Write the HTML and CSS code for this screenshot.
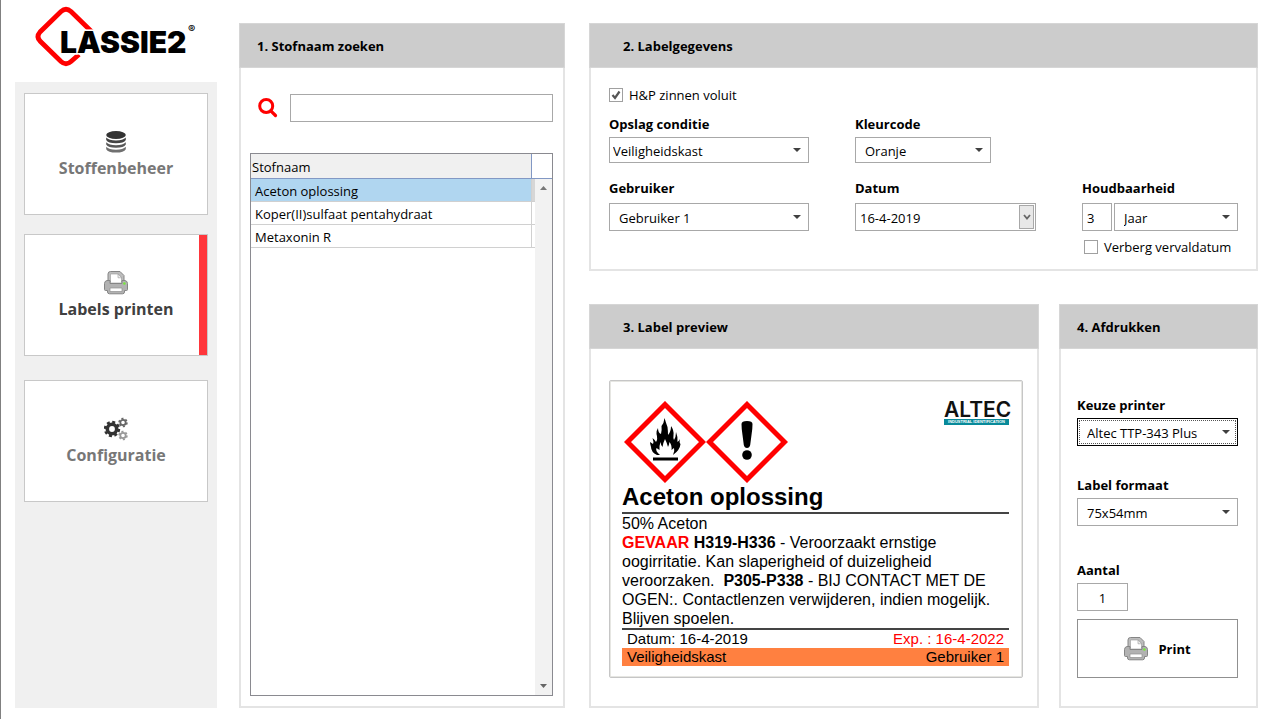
FILE: index.html
```html
<!DOCTYPE html>
<html lang="nl">
<head>
<meta charset="utf-8">
<meta name="viewport" content="width=device-width, initial-scale=1">
<title>LASSIE2 - Labels printen</title>
<link rel="stylesheet" href="styles.css">
</head>
<body>
<svg class="symbols" aria-hidden="true">
  <symbol id="icon-printer" viewBox="0 0 24 24">
    <path d="M4 10.500V3a2.500 2.500 0 0 1 2.500-2.500H16L20 4.500V10.500Z" fill="#bdbdbd" stroke="#858585"/>
    <path d="M6.500 12V3H14.500L17.500 6.500V12Z" fill="#fff" stroke="#999" stroke-width=".6"/>
    <path d="M14 3V6.800H17.800Z" fill="#eee" stroke="#999" stroke-width=".6"/>
    <path d="M3 9.500H6V12.500H18V9.500H21Q23.500 10 23.500 12.500V18.500Q23.500 19.500 22.500 19.500H20.500V21Q20.500 22.800 18.500 22.800H5.500Q3.500 22.800 3.500 21V19.500H1.500Q.5 19.500 .5 18.500V12.500Q.5 10 3 9.500Z" fill="#b2b2b2" stroke="#858585"/>
    <path d="M6 17H18V20.500H6Z" fill="#fff" stroke="#909090" stroke-width=".7"/>
    <circle cx="20.400" cy="12.500" r="1.300" fill="#77e83a"/>
  </symbol>
</svg>
<div class="app">
  <aside class="side">
    <svg class="logo" viewBox="0 0 170 62" role="img" aria-label="LASSIE2">
      <path d="M60 26 L39 5.500 Q34 1 29 5.500 L8 26 Q4 30.500 8 35 L29 55.500 Q34 60 39 55.500 L47 48.500" fill="none" stroke="#f00" stroke-width="4.800"/>
      <text class="logo-text" x="28" y="47">LASSIE2</text>
      <text class="logo-mark" x="156" y="27">®</text>
    </svg>
    <nav class="nav">
      <div class="nav-group">
        <button class="nav-item" type="button">
          <svg class="nav-icon" viewBox="0 0 24 24" aria-hidden="true">
            <ellipse cx="12" cy="5" rx="9.800" ry="4" fill="#333"/>
            <path d="M2.200 7.600Q5 10.600 12 10.600T21.800 7.600V10Q20 13.200 12 13.200T2.200 10Z" fill="#444"/>
            <path d="M2.200 12.200Q5 15.200 12 15.200T21.800 12.200V14.600Q20 17.800 12 17.800T2.200 14.600Z" fill="#585858"/>
            <path d="M2.200 16.800Q5 19.800 12 19.800T21.800 16.800V19.200Q20 22.600 12 22.600T2.200 19.200Z" fill="#707070"/>
          </svg>
          <span>Stoffenbeheer</span>
        </button>
        <button class="nav-item nav-item--active" type="button" aria-current="page">
          <svg class="nav-icon" aria-hidden="true"><use href="#icon-printer"/></svg>
          <span>Labels printen</span>
        </button>
      </div>
      <button class="nav-item" type="button">
        <svg class="nav-icon" viewBox="0 0 24 24" fill="none" aria-hidden="true">
          <circle cx="8" cy="12" r="4.700" stroke="#333" stroke-width="3.600"/>
          <circle cx="8" cy="12" r="7" stroke="#333" stroke-width="2.400" stroke-dasharray="3 2.500"/>
          <circle cx="19" cy="5.500" r="2.700" stroke="#666" stroke-width="1.800"/>
          <circle cx="19" cy="5.500" r="4" stroke="#666" stroke-width="1.500" stroke-dasharray="2.100 2.090"/>
          <circle cx="19" cy="18.500" r="2.700" stroke="#999" stroke-width="1.800"/>
          <circle cx="19" cy="18.500" r="4" stroke="#999" stroke-width="1.500" stroke-dasharray="2.100 2.090"/>
        </svg>
        <span>Configuratie</span>
      </button>
    </nav>
  </aside>

  <section class="panel">
    <h2 class="panel-title panel-title--near">1. Stofnaam zoeken</h2>
    <div class="search-body">
      <div class="search">
        <label for="search-name"><svg class="search-icon" viewBox="0 0 20 20" fill="none" stroke="#f00" role="img" aria-label="Zoeken"><circle cx="8.200" cy="8" r="6.500" stroke-width="3"/><path d="M12.800 12.800L17.500 17.500" stroke-width="3.200" stroke-linecap="round"/></svg></label>
        <input class="control" id="search-name" type="text">
      </div>
      <div class="list">
        <table class="list-table">
          <thead><tr><th>Stofnaam</th><th class="list-edge"></th></tr></thead>
          <tbody>
            <tr class="selected"><td>Aceton oplossing</td><td class="list-edge"></td></tr>
            <tr><td>Koper(II)sulfaat pentahydraat</td><td class="list-edge"></td></tr>
            <tr><td>Metaxonin R</td><td class="list-edge"></td></tr>
          </tbody>
        </table>
        <div class="scroll" aria-hidden="true">
          <svg class="scroll-arrow" viewBox="0 0 7 4"><path d="M0 4L3.500 0L7 4Z" fill="#777"/></svg>
          <svg class="scroll-arrow" viewBox="0 0 7 4"><path d="M0 0L3.500 4L7 0Z" fill="#666"/></svg>
        </div>
      </div>
    </div>
  </section>

  <main class="main">
    <section class="panel">
      <h2 class="panel-title">2. Labelgegevens</h2>
      <div class="details">
        <label class="check"><input type="checkbox" checked>H&amp;P zinnen voluit</label>
        <div class="detail-row">
          <div class="field">
            <label for="storage">Opslag conditie</label>
            <select class="control control--low control--flush" id="storage"><option>Veiligheidskast</option></select>
          </div>
          <div class="field">
            <label for="color">Kleurcode</label>
            <select class="control control--low control--short" id="color"><option>Oranje</option></select>
          </div>
        </div>
        <div class="detail-row detail-row--second">
          <div class="field">
            <label for="user">Gebruiker</label>
            <select class="control" id="user"><option>Gebruiker 1</option></select>
          </div>
          <div class="field">
            <label for="date">Datum</label>
            <div class="date">
              <input id="date" type="text" value="16-4-2019">
              <button class="date-button" type="button" aria-label="Kies datum"><svg viewBox="0 0 8 6" fill="none" stroke="#666" stroke-width="1.800"><path d="M1 1L4 4.500L7 1"/></svg></button>
            </div>
          </div>
          <div class="field">
            <label for="term">Houdbaarheid</label>
            <div class="term">
              <input class="control control--term" id="term" type="text" value="3">
              <select class="control" aria-label="Eenheid"><option>Jaar</option></select>
            </div>
            <label class="check check--inset"><input type="checkbox">Verberg vervaldatum</label>
          </div>
        </div>
      </div>
    </section>

    <div class="lower">
      <section class="panel">
        <h2 class="panel-title">3. Label preview</h2>
        <div class="preview">
          <article class="label">
            <header class="label-head">
              <div class="hazards">
                <svg class="hazard" viewBox="0 0 82 82" role="img" aria-label="Ontvlambaar">
                  <path d="M41 3.500L78.500 41L41 78.500L3.500 41Z" fill="#fff" stroke="#f00" stroke-width="5"/>
                  <path d="M33 54Q27 51 27 46Q26 43 26 41L29 43Q30 41 28.500 37Q31 39 32 41Q34 38 32.500 33Q32 30 34 27Q34 32 37 33Q38 29 37.500 25Q40 22 40.500 17Q42 22 43.500 26Q44 30 44 34Q47 31 47 25Q50 29 49.500 34Q49 37 50 39Q52 36 52 31Q54 36 53.500 41Q55 40 56 38Q55 42 56.500 43Q56 49 49 54Q51 50 50 47L47.500 49Q48 44 45.500 41Q45 44 44 46Q43 42 41 38Q39 42 38.500 46Q37 45 36.500 41Q35 45 35.500 49L32.500 47Q31 50 36 54Z" fill="#000"/>
                  <path d="M29 58H54" stroke="#000" stroke-width="3"/>
                </svg>
                <svg class="hazard" viewBox="0 0 82 82" role="img" aria-label="Schadelijk">
                  <path d="M41 3.500L78.500 41L41 78.500L3.500 41Z" fill="#fff" stroke="#f00" stroke-width="5"/>
                  <path d="M35.500 23Q35.500 20 41 20T46.500 23Q46.500 28 45.500 34L44.200 44Q43.500 47 41 47T37.800 44L36.500 34Q35.500 28 35.500 23Z"/>
                  <circle cx="41" cy="54" r="4.800"/>
                </svg>
              </div>
              <div class="brand"><strong>ALTEC</strong><span>INDUSTRIAL IDENTIFICATION</span></div>
            </header>
            <h3 class="label-name">Aceton oplossing</h3>
            <div class="label-text">
              <p>50% Aceton</p>
              <p><b class="danger">GEVAAR</b> <b>H319-H336</b> - Veroorzaakt ernstige oogirritatie. Kan slaperigheid of duizeligheid veroorzaken. &nbsp;<b>P305-P338</b> - BIJ CONTACT MET DE OGEN:. Contactlenzen verwijderen, indien mogelijk. Blijven spoelen.</p>
            </div>
            <div class="label-line"><span>Datum: 16-4-2019</span><span class="expiry">Exp. : 16-4-2022</span></div>
            <div class="label-line label-line--color"><span>Veiligheidskast</span><span>Gebruiker 1</span></div>
          </article>
        </div>
      </section>

      <section class="panel">
        <h2 class="panel-title panel-title--near">4. Afdrukken</h2>
        <form class="print">
          <div class="print-choices">
            <div class="field">
              <label for="printer">Keuze printer</label>
              <select class="control control--focus" id="printer"><option>Altec TTP-343 Plus</option></select>
            </div>
            <div class="field">
              <label for="format">Label formaat</label>
              <select class="control" id="format"><option>75x54mm</option></select>
            </div>
          </div>
          <div class="print-run">
            <div class="field">
              <label for="count">Aantal</label>
              <input class="control control--count" id="count" type="text" value="1">
            </div>
            <button class="print-button" type="button"><svg class="nav-icon" aria-hidden="true"><use href="#icon-printer"/></svg>Print</button>
          </div>
        </form>
      </section>
    </div>
  </main>
</div>
</body>
</html>
```
FILE: styles.css
```css
* { box-sizing: border-box; }

body {
  margin: 0;
  background: #fff;
  color: #000;
  font: 13px/20px "Open Sans", "Noto Sans", sans-serif;
}

h2, h3, p { margin: 0; }

button, input, select { font: inherit; color: inherit; }

.symbols { position: absolute; width: 0; height: 0; }

.app {
  display: grid;
  grid-template-columns: 202px minmax(0, 326fr) minmax(0, 671fr);
  column-gap: 22px;
  min-height: 100vh;
  padding: 23px 20px 11px 14px;
  border-left: 1px solid #808080;
}

/* Sidebar */
.side {
  display: flex;
  flex-direction: column;
  margin-top: -17px;
}

.logo {
  display: block;
  width: 170px;
  height: 62px;
  margin: 0 0 14px 17px;
  overflow: visible;
}

.logo-text {
  font: 900 30px Inter, sans-serif;
  stroke: #fff;
  stroke-width: 3px;
  paint-order: stroke;
}

.logo-mark { font: 700 11px Inter, sans-serif; }

.nav {
  flex: 1;
  display: flex;
  flex-direction: column;
  gap: 24px;
  padding: 11px 9px;
  background: #f0f0f0;
}

.nav-group {
  display: flex;
  flex-direction: column;
  gap: 19px;
}

.nav-item {
  display: flex;
  flex-direction: column;
  align-items: center;
  justify-content: center;
  gap: 2px;
  height: 122px;
  padding: 2px 0 0;
  border: 1px solid #c8c8c8;
  background: #fff;
  color: #777;
  font-size: 16px;
  font-weight: 700;
  line-height: 24px;
}

.nav-item--active {
  color: #404040;
  background: linear-gradient(#ff363b, #ff363b) right / 8px 100% no-repeat #fff;
}

.nav-icon { width: 24px; height: 24px; }

/* Panels */
.panel {
  display: flex;
  flex-direction: column;
  border: 2px solid #e4e4e4;
}

.panel-title {
  height: 45px;
  margin: -2px -2px 0;
  padding: 0 33px;
  border: 1px solid #d6d6d6;
  background: #ccc;
  font-size: 13px;
  line-height: 44px;
}

.panel-title--near { padding: 0 17px; }

.control {
  width: 100%;
  height: 28px;
  padding: 1px 9px 0;
  border: 1px solid #a8a8a8;
  border-radius: 0;
  background: #fff;
}

select.control {
  appearance: none;
  background: url("data:image/svg+xml,%3Csvg xmlns='http://www.w3.org/2000/svg' width='8' height='4'%3E%3Cpath d='M0 0H8L4 4Z' fill='%23404040'/%3E%3C/svg%3E") right 7px center no-repeat #fff;
}

.control--low { height: 26px; }
.control--flush { padding: 1px 3px 0; }
.control--short { width: 75%; }
.control--term { flex: 0 0 30px; padding: 1px 4px 0; }
.control--count { width: 51px; text-align: center; }

.control--focus {
  border-color: #000;
  outline: 1px dotted #555;
  outline-offset: -3px;
}

.field {
  display: flex;
  flex-direction: column;
  gap: 3px;
}

.field > label { font-weight: 700; }

.field > .check,
.check {
  display: flex;
  align-items: center;
  gap: 6px;
  font-weight: 400;
}

.check--inset { margin: 1px 0 0 2px; }

.check input {
  appearance: none;
  width: 14px;
  height: 14px;
  margin: 0;
  border: 1px solid #a0a0a0;
  background: #fff;
}

.check input:checked {
  background: url("data:image/svg+xml,%3Csvg xmlns='http://www.w3.org/2000/svg' width='10' height='10' fill='none'%3E%3Cpath d='M1.500 5L4 8L8.500 1.500' stroke='%23555' stroke-width='2.200'/%3E%3C/svg%3E") center no-repeat;
}

/* Search */
.search-body {
  flex: 1;
  display: flex;
  flex-direction: column;
  gap: 31px;
  padding: 26px 10px 10px 9px;
}

.search {
  display: flex;
  align-items: center;
  gap: 12px;
  padding-left: 8px;
}

.search-icon { display: block; width: 20px; height: 20px; }

.list {
  flex: 1;
  display: flex;
  align-items: stretch;
  border: 1px solid #8a8a90;
}

.list-table {
  flex: 1;
  align-self: flex-start;
  border-collapse: separate;
  border-spacing: 0;
}

.list-table th {
  height: 25px;
  padding: 2px 1px 0;
  border-right: 1px solid #8298c4;
  border-bottom: 1px solid #8298c4;
  background: #f0f0f0;
  font-weight: 400;
  text-align: left;
}

.list-table td {
  height: 23px;
  padding: 2px 4px 0;
  border-right: 1px solid #d0d0d0;
  border-bottom: 1px solid #d0d0d0;
}

.list-table .list-edge {
  width: 3px;
  padding: 0;
  border-right: 0;
}

.list-table th.list-edge { background: #fff; }
.selected td { background: #b0d6f0; }
.selected .list-edge { background: #d6d6d6; }

.scroll {
  display: flex;
  flex-direction: column;
  align-items: center;
  justify-content: space-between;
  width: 17px;
  padding: 32px 0 7px;
  background: linear-gradient(#fff 24px, #8298c4 24px, #8298c4 25px, #f2f2f2 25px);
}

.scroll-arrow { width: 7px; height: 4px; }

/* Label fields */
.main {
  display: flex;
  flex-direction: column;
  gap: 33px;
  padding-left: 2px;
}

.details { padding: 17px 18px 12px; }

.detail-row {
  display: grid;
  grid-template-columns: minmax(0, 200fr) minmax(0, 181fr) minmax(0, 156fr);
  column-gap: 46px;
  margin-top: 9px;
}

.detail-row--second { margin-top: 15px; }
.detail-row--second .field { gap: 5px; }
.detail-row--second .check { gap: 6px; }

.date {
  display: flex;
  height: 28px;
  padding: 1px;
  border: 1px solid #a8a8a8;
}

.date input {
  flex: 1;
  min-width: 0;
  padding: 1px 3px 0;
  border: 0;
}

.date-button {
  display: grid;
  place-items: center;
  width: 15px;
  padding: 0;
  border: 1px solid #a8a8a8;
  background: #e8e8e8;
}

.date-button svg { width: 8px; height: 6px; }

.term { display: flex; gap: 2px; }

.lower {
  flex: 1;
  display: grid;
  grid-template-columns: minmax(0, 450fr) minmax(0, 199fr);
  column-gap: 20px;
}

/* Label preview */
.preview { padding: 31px 14px 28px 18px; }

.label {
  padding: 20px 13px 11px 12px;
  border: 1px solid #c6c6c6;
  border-radius: 2px;
  box-shadow: inset 0 0 0 1px #e6e6e2;
  font: 16px/19px "Liberation Sans", Arial, sans-serif;
}

.label-head {
  display: flex;
  justify-content: space-between;
}

.hazards { display: flex; padding-left: 2px; }
.hazard { display: block; width: 82px; height: 82px; }

.brand {
  width: 65px;
  color: #111;
  text-align: center;
}

.brand strong {
  display: block;
  font: 600 21px/18px Inter, sans-serif;
}

.brand span {
  display: block;
  background: #088a9a;
  color: #fff;
  font: 700 4px/6px "Liberation Sans", Arial, sans-serif;
  white-space: nowrap;
}

.label-name {
  padding-bottom: 2px;
  border-bottom: 2px solid #444;
  font-size: 24px;
  line-height: 27px;
}

.label-text {
  border-bottom: 2px solid #444;
}

.danger { color: #f00; }

.label-line {
  display: flex;
  justify-content: space-between;
  padding: 0 5px;
  font-size: 15px;
  line-height: 18px;
}

.label-line--color { background: #ff8040; }
.expiry { color: #f00; }

/* Printing */
.print {
  display: flex;
  flex-direction: column;
  gap: 34px;
  padding: 46px 18px 28px 16px;
}

.print-choices {
  display: flex;
  flex-direction: column;
  gap: 29px;
}

.print-run {
  display: flex;
  flex-direction: column;
  gap: 8px;
}

.print-button {
  display: flex;
  align-items: center;
  justify-content: center;
  gap: 10px;
  height: 59px;
  border: 1px solid #909090;
  background: #fff;
  font-weight: 700;
}
```
